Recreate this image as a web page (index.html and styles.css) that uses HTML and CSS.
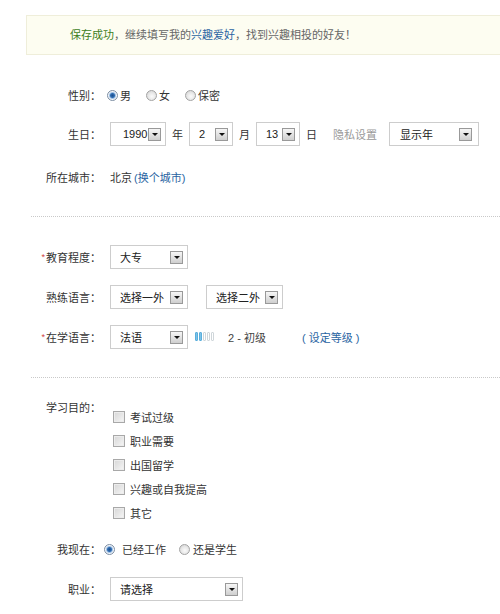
FILE: index.html
```html
<!DOCTYPE html>
<html lang="zh-CN">
<head>
<meta charset="utf-8">
<title>资料设置</title>
<link rel="stylesheet" href="styles.css">
</head>
<body>
<div class="banner"><span class="ok">保存成功</span>，继续填写我的<a class="link">兴趣爱好</a>，找到兴趣相投的好友！</div>

<div class="row r-gender">
  <div class="label">性别：</div>
  <div class="field f-gender">
    <span class="opt"><i class="radio on"></i>男</span>
    <span class="opt"><i class="radio"></i>女</span>
    <span class="opt"><i class="radio"></i>保密</span>
  </div>
</div>

<div class="row r-birth">
  <div class="label">生日：</div>
  <div class="field f-birth">
    <span class="sel w-year"><span>1990</span><i class="arr"></i></span>
    <span class="unit">年</span>
    <span class="sel w-small"><span>2</span><i class="arr"></i></span>
    <span class="unit">月</span>
    <span class="sel w-small"><span>13</span><i class="arr"></i></span>
    <span class="unit">日</span>
    <span class="muted privacy">隐私设置</span>
    <span class="sel w-show"><span>显示年</span><i class="arr"></i></span>
  </div>
</div>

<div class="row r-city">
  <div class="label">所在城市：</div>
  <div class="field">北京 <a class="link city">(换个城市)</a></div>
</div>

<div class="sep sep1"></div>

<div class="row r-edu">
  <div class="label"><span class="req">*</span>教育程度：</div>
  <div class="field">
    <span class="sel w-mid"><span>大专</span><i class="arr"></i></span>
  </div>
</div>

<div class="row r-lang">
  <div class="label">熟练语言：</div>
  <div class="field">
    <span class="sel w-mid"><span>选择一外</span><i class="arr"></i></span>
    <span class="sel w-mid2 second"><span>选择二外</span><i class="arr"></i></span>
  </div>
</div>

<div class="row r-study">
  <div class="label"><span class="req">*</span>在学语言：</div>
  <div class="field">
    <span class="sel w-mid"><span>法语</span><i class="arr"></i></span>
    <span class="level"><i class="pill on"></i><i class="pill on"></i><i class="pill"></i><i class="pill"></i><i class="pill"></i></span>
    <span class="level-text">2 - 初级</span>
    <a class="link set-level">( 设定等级 )</a>
  </div>
</div>

<div class="sep sep2"></div>

<div class="purpose">
  <div class="label plabel">学习目的：</div>
  <ul class="checks">
    <li><i class="check"></i>考试过级</li>
    <li><i class="check"></i>职业需要</li>
    <li><i class="check"></i>出国留学</li>
    <li><i class="check"></i>兴趣或自我提高</li>
    <li><i class="check"></i>其它</li>
  </ul>
</div>

<div class="row r-now">
  <div class="label">我现在：</div>
  <div class="field f-now">
    <span class="opt wide"><i class="radio on"></i>已经工作</span>
    <span class="opt"><i class="radio"></i>还是学生</span>
  </div>
</div>

<div class="row r-job">
  <div class="label">职业：</div>
  <div class="field">
    <span class="sel w-job"><span>请选择</span><i class="arr"></i></span>
  </div>
</div>
</body>
</html>
```

FILE: styles.css
```css
html, body {
  margin: 0;
  padding: 0;
  background: #fff;
  overflow: hidden;
}
body {
  width: 500px;
  font-family: "Liberation Sans", "Noto Sans CJK SC", sans-serif;
  font-size: 11px;
  color: #333;
}
a.link {
  color: #2a64a2;
  text-decoration: none;
}

.banner {
  margin: 15px -20px 0 26px;
  height: 38px;
  line-height: 38px;
  padding-left: 43px;
  border: 1px solid #efeeda;
  background: #fdfdf1;
  color: #666;
  white-space: nowrap;
}
.banner .ok { color: #3e7d1c; }

.row {
  display: flex;
  align-items: center;
  height: 24px;
}
.label {
  width: 101px;
  flex: none;
  text-align: right;
  white-space: nowrap;
  color: #333;
}
.field {
  display: flex;
  align-items: center;
  margin-left: 9px;
  white-space: nowrap;
}

.r-gender { margin-top: 28px; }
.r-birth { margin-top: 15px; }
.r-city { margin-top: 19px; }
.r-edu { margin-top: 28px; }
.r-lang { margin-top: 16px; }
.r-study { margin-top: 16px; }
.r-now { margin-top: 12px; }
.r-job { margin-top: 16px; }

.sep {
  margin-left: 31px;
  margin-right: -10px;
  border-top: 1px dotted #c9c9c9;
}
.sep1 { margin-top: 27px; }
.sep2 { margin-top: 28px; }

/* radios */
.opt {
  display: inline-flex;
  align-items: center;
  gap: 2px;
}
.f-gender { margin-left: 6px; }
.f-gender .opt { margin-right: 15px; }
.radio {
  display: inline-block;
  width: 11px;
  height: 11px;
  box-sizing: border-box;
  border-radius: 50%;
  border: 1px solid #a3a3a3;
  background: radial-gradient(circle at 55% 60%, #fbfbfb 0, #e9e9e9 45%, #cdcdcd 100%);
}
.radio.on {
  border-color: #7d8ea3;
  background: radial-gradient(circle at 50% 50%, #1e4f8c 0, #2f6cb1 2px, #9fc0e4 3px, #f4f7fb 4px, #dfe3e8 100%);
}
.f-now { margin-left: 3px; }
.f-now .opt.wide { gap: 7px; margin-right: 13px; }
.f-now .opt { gap: 3px; }

/* selects */
.sel {
  display: inline-flex;
  align-items: center;
  justify-content: space-between;
  height: 24px;
  box-sizing: border-box;
  border: 1px solid #cdcdcd;
  background: #fff;
  padding: 0 4px 0 9px;
  color: #222;
}
.arr {
  display: inline-flex;
  align-items: center;
  justify-content: center;
  width: 13px;
  height: 13px;
  box-sizing: border-box;
  border: 1px solid #999;
  background: linear-gradient(#f6f6f6, #cfcfcf);
}
.arr::after {
  content: "";
  border-left: 3px solid transparent;
  border-right: 3px solid transparent;
  border-top: 3px solid #111;
  margin-top: 1px;
}
.w-year { width: 56px; padding-left: 12px; }
.w-small { width: 44px; }
.w-show { width: 90px; padding-left: 10px; padding-right: 6px; }
.w-mid { width: 78px; }
.w-mid2 { width: 77px; }
.w-job { width: 133px; padding-left: 9px; }
.second { margin-left: 18px; }

.f-birth { gap: 6px; }
.unit { color: #333; }
.muted { color: #999; }
.privacy { margin-left: 10px; margin-right: 6px; }

.city { margin-left: 2px; }

.req {
  color: #d04040;
  font-size: 9px;
  vertical-align: 2px;
  margin-right: 1px;
}

/* level */
.level {
  display: inline-flex;
  gap: 1px;
  margin-left: 7px;
  align-self: flex-start;
  margin-top: 7px;
}
.pill {
  display: block;
  width: 3px;
  height: 9px;
  box-sizing: border-box;
  border-radius: 1px;
  border: 1px solid #cfd6da;
  background: #fff;
}
.pill.on {
  border-color: #5aaedc;
  background: #7cc3e8;
}
.level-text { margin-left: 14px; color: #444; }
.set-level { margin-left: 36px; }

/* purpose */
.purpose {
  display: flex;
  align-items: flex-start;
  margin-top: 22px;
}
.plabel {
  height: 16px;
  line-height: 16px;
}
.checks {
  list-style: none;
  margin: 0 0 0 12px;
  padding: 5px 0 0;
}
.checks li {
  display: flex;
  align-items: center;
  height: 24px;
  gap: 5px;
  color: #333;
}
.check {
  display: inline-block;
  width: 12px;
  height: 12px;
  box-sizing: border-box;
  border: 1px solid #a8a8a8;
  background: linear-gradient(135deg, #d6d6d6, #f6f6f6);
  box-shadow: inset 0 0 0 1px #ececec;
}
```
